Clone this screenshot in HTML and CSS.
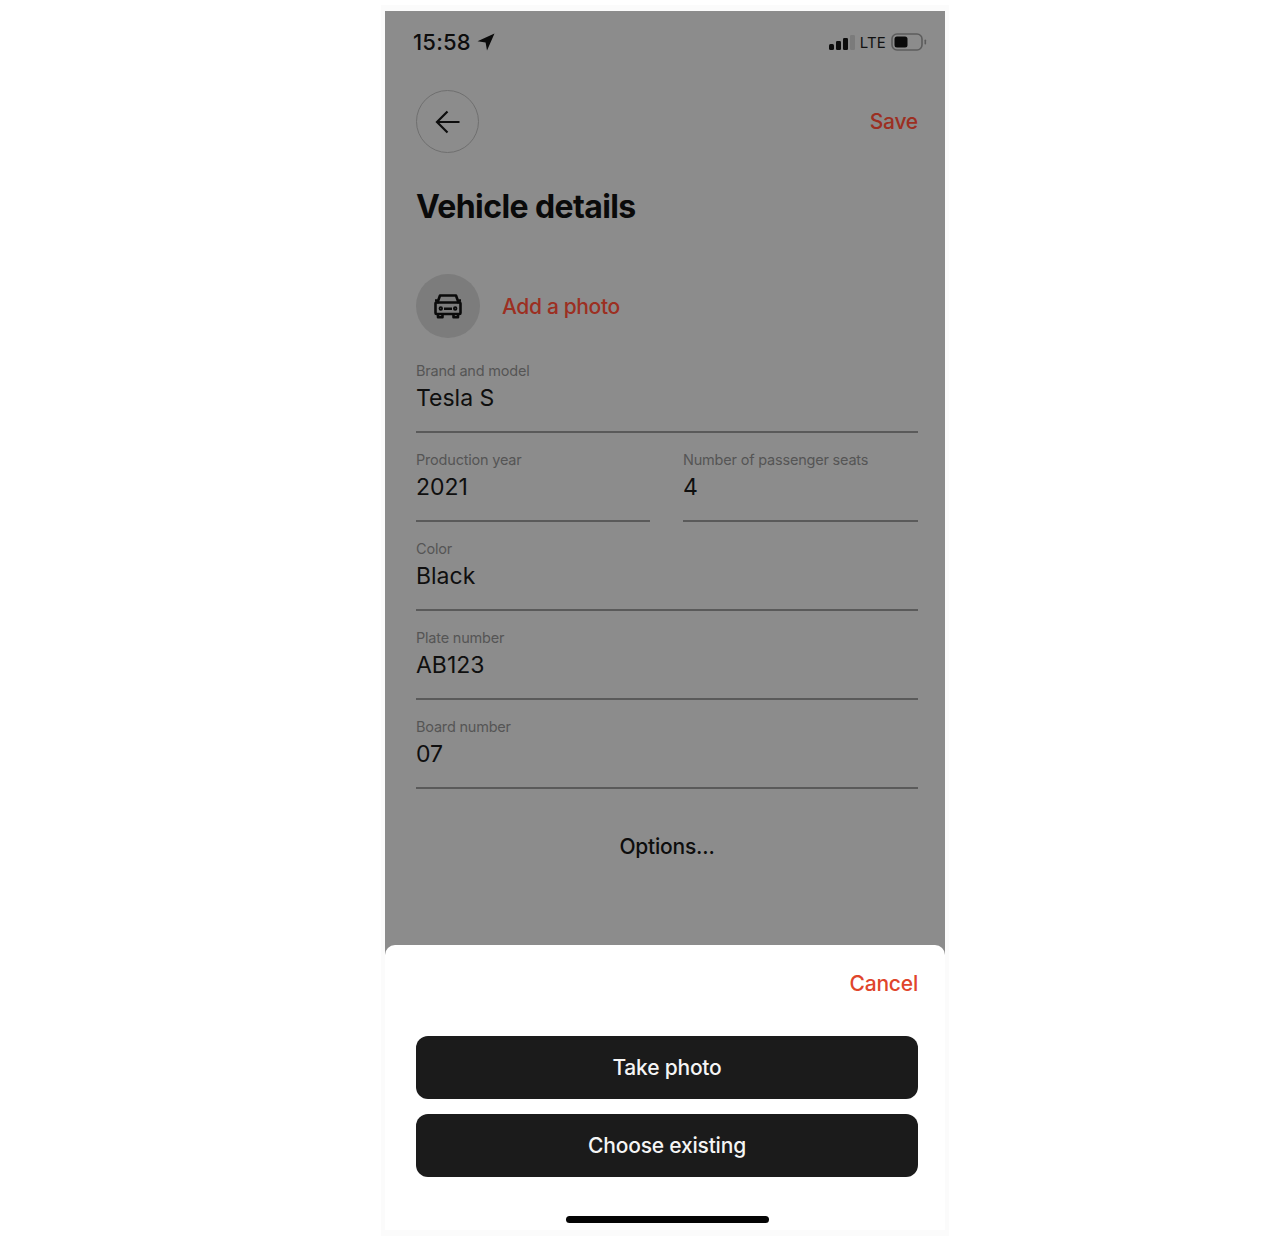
FILE: index.html
```html
<!DOCTYPE html>
<html lang="en">
<head>
<meta charset="utf-8">
<title>Vehicle details</title>
<link rel="stylesheet" href="styles.css">
</head>
<body>
<div class="frame">
  <div class="phone">
    <main class="screen">
      <div class="status">
        <div class="time"><span>15:58</span>
          <svg class="loc" viewBox="0 0 18 18"><path d="M17.5 .5 .5 8.2 8.6 9.4 10 17.5Z" fill="#0a0a0a"/></svg>
        </div>
        <div class="indicators">
          <svg class="signal" viewBox="0 0 26 15"><rect x="0" y="9" width="5" height="6" rx="1.5" fill="#0d0d0d"/><rect x="7" y="6" width="5" height="9" rx="1.2" fill="#0d0d0d"/><rect x="14" y="3" width="5" height="12" rx="1.2" fill="#0d0d0d"/><rect x="21" y="0" width="5" height="15" rx="1.2" fill="#7b7b7b"/></svg>
          <span class="lte">LTE</span>
          <svg class="battery" viewBox="0 0 36 18"><rect x="1" y="1" width="30" height="16" rx="5" fill="none" stroke="#5c5c5c" stroke-width="1.6"/><rect x="3.5" y="3.5" width="13" height="11" rx="2.5" fill="#0a0a0a"/><rect x="33.5" y="6.5" width="1.6" height="5" rx=".8" fill="#5c5c5c"/></svg>
        </div>
      </div>
      <div class="topbar">
        <div class="back">
          <svg class="arrow" viewBox="0 0 26 24"><path d="M24.5 12H2M12.5 1.5 2 12l10.5 10.5" fill="none" stroke="#0d0d0d" stroke-width="2.2"/></svg>
        </div>
        <span class="save">Save</span>
      </div>
      <h1 class="title">Vehicle details</h1>
      <div class="photo-row">
        <div class="avatar">
          <svg class="car" viewBox="0 0 28 26" fill="none" stroke="#0a0a0a" stroke-width="2.6" stroke-linejoin="round">
            <path d="M6 2.5h16l2.5 7H25.500a1 1 0 0 1 1 1V20a1 1 0 0 1-1 1H2.500a1 1 0 0 1-1-1V10.500a1 1 0 0 1 1-1H3.500Z"/>
            <path d="M3.500 9.500h21M10 15.800h8M1 7.500h2.500M24.500 7.500H27"/>
            <path d="M4 21v3.300h4.500V21M19.500 21v3.300H24V21"/>
            <circle cx="6.800" cy="15.500" r=".9"/><circle cx="21.200" cy="15.500" r=".9"/>
          </svg>
        </div>
        <span class="add">Add a photo</span>
      </div>
      <div class="field first">
        <label class="label">Brand and model</label>
        <div class="value">Tesla S</div>
      </div>
      <div class="field-pair">
        <div class="field">
          <label class="label">Production year</label>
          <div class="value">2021</div>
        </div>
        <div class="field">
          <label class="label">Number of passenger seats</label>
          <div class="value">4</div>
        </div>
      </div>
      <div class="field">
        <label class="label">Color</label>
        <div class="value">Black</div>
      </div>
      <div class="field">
        <label class="label">Plate number</label>
        <div class="value">AB123</div>
      </div>
      <div class="field">
        <label class="label">Board number</label>
        <div class="value">07</div>
      </div>
      <div class="options">Options...</div>
    </main>
    <section class="sheet">
      <div class="cancel-row"><span class="cancel">Cancel</span></div>
      <button class="btn">Take photo</button>
      <button class="btn">Choose existing</button>
      <div class="home"></div>
    </section>
  </div>
</div>
</body>
</html>
```
FILE: styles.css
```css
* { box-sizing: border-box; }
html, body { margin: 0; background: #fff; }
body { font-family: Inter, "Liberation Sans", sans-serif; height: 1250px; overflow: hidden; }
.frame {
  width: 568px;
  margin: 5px 0 0 381px;
  padding: 6px 3px 6px 4px;
  background: #fbfbfb;
}
.phone { width: 560px; height: 1219px; display: flex; flex-direction: column; background: #8c8c8c; }
.screen { height: 934px; padding: 0 27px 0 31px; background: #8c8c8c; flex: none; }
.status { display: flex; justify-content: space-between; align-items: center; height: 30px; margin: 16px -9px 0 -3px; }
.time { display: flex; align-items: center; gap: 6px; font-size: 22px; font-weight: 500; color: #0d0d0d; letter-spacing: .2px; }
.loc { width: 18px; height: 18px; }
.indicators { display: flex; align-items: center; }
.signal { width: 26px; height: 15px; }
.lte { font-size: 15px; color: #111; margin-left: 5px; letter-spacing: .2px; }
.battery { width: 36px; height: 18px; margin-left: 5px; }
.topbar { display: flex; justify-content: space-between; align-items: center; margin-top: 33px; }
.back { width: 63px; height: 63px; border: 1px solid #6f6f6f; border-radius: 50%; display: flex; align-items: center; justify-content: center; }
.arrow { width: 26px; height: 24px; }
.save { font-size: 21px; font-weight: 500; color: #9c2f22; letter-spacing: -.2px; }
.title { margin: 34px 0 0; font-size: 32px; line-height: 40px; font-weight: 700; letter-spacing: -.6px; color: #0a0a0a; }
.photo-row { display: flex; align-items: center; gap: 22px; margin-top: 47px; }
.avatar { width: 64px; height: 64px; border-radius: 50%; background: #7c7c7c; display: flex; align-items: center; justify-content: center; }
.car { width: 28px; height: 26px; }
.add { font-size: 21px; font-weight: 500; color: #9c2f22; letter-spacing: -.35px; }
.field { height: 89px; padding-top: 18px; border-bottom: 2px solid #5a5a5a; }
.field.first { height: 95px; margin-top: 0; padding-top: 24px; }
.field-pair { display: grid; grid-template-columns: 234px 235px; column-gap: 33px; }
.label { display: block; font-size: 14.500px; line-height: 18px; font-weight: 400; letter-spacing: -.2px; color: #555; }
.value { font-size: 23px; line-height: 28px; margin-top: 4px; color: #0f0f0f; }
.options { text-align: center; margin-top: 44px; font-size: 21px; line-height: 28px; font-weight: 500; color: #0d0d0d; letter-spacing: -.2px; padding-right: 0; }
.sheet { flex: 1; background: #fff; border-radius: 10px 10px 0 0; padding: 0 27px 0 31px; display: flex; flex-direction: column; }
.cancel-row { display: flex; justify-content: flex-end; margin-top: 24px; height: 28px; align-items: center; }
.cancel { font-size: 21px; font-weight: 500; color: #e0452b; letter-spacing: -.2px; }
.btn { border: 0; height: 63px; width: 100%; flex: none; margin-top: 39px; border-radius: 12px; background: #1b1b1b; color: #f5f5f5; font: 500 21px Inter, "Liberation Sans", sans-serif; letter-spacing: -.2px; }
.btn + .btn { margin-top: 15px; }
.home { width: 203px; height: 7px; border-radius: 4px; background: #050505; margin: 39px auto 0; }
```
